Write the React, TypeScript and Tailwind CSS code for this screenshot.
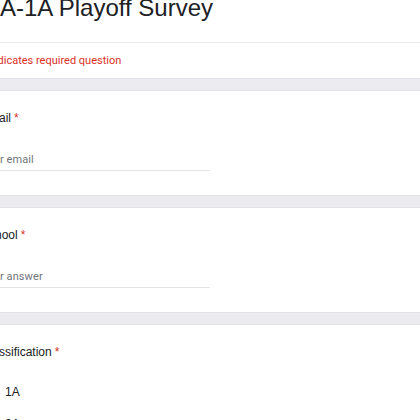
import React from 'react';

const sans = "font-['Liberation_Sans',Arial,sans-serif]";
const roboto = "font-['Roboto','Liberation_Sans',sans-serif]";

function Card({ children, className = '' }: { children: React.ReactNode; className?: string }) {
  return (
    <div className={`bg-white border-y border-[#e2e2e8] px-[18px] ${className}`}>{children}</div>
  );
}

function QuestionTitle({ text }: { text: string }) {
  return (
    <div className={`${sans} text-[12px] leading-[18px] text-[#202124]`}>
      {text}
      <span className="pl-[3px] text-[#d93025]">*</span>
    </div>
  );
}

function TextQuestion({ title, placeholder }: { title: string; placeholder: string }) {
  return (
    <Card className="h-[106px] pt-[18px]">
      <QuestionTitle text={title} />
      <div className="mt-[25px] w-[229px] border-b border-[#e3e3e3] pb-[2px]">
        <div className={`${roboto} text-[11px] leading-[16px] tracking-[0.1px] text-[#70757a]`}>{placeholder}</div>
      </div>
    </Card>
  );
}

const options = ['1A', '2A', '3A', '4A'];

export default function App() {
  return (
    <div className="h-[420px] w-[420px] overflow-hidden bg-[#ebebf0]">
      <div className="-ml-[37px] -mt-[26px] flex w-[500px] flex-col gap-[11px]">
        <Card className="h-[105px] pt-[18px]">
          <h1 className={`${sans} pl-[19px] text-[24px] leading-[30px] text-[#202124]`}>A-1A Playoff Survey</h1>
          <div className="-mx-[18px] mt-[19px] border-t border-[#ececec]" />
          <div className={`${roboto} pt-[10px] text-[11px] leading-[16px] text-[#d93025]`}>
            * Indicates required question
          </div>
        </Card>

        <TextQuestion title="Email" placeholder="Your email" />
        <TextQuestion title="School" placeholder="Your answer" />

        <Card className="pt-[18px] pb-[18px]">
          <QuestionTitle text="Classification" />
          <div className="mt-[15px] flex flex-col">
            {options.map((o) => (
              <label key={o} className="flex h-[32px] items-center gap-[9px]">
                <span className="h-[15px] w-[15px] rounded-full border-[1.5px] border-[#5f6368]" />
                <span className={`${sans} text-[12px] leading-[18px] text-[#202124]`}>{o}</span>
              </label>
            ))}
          </div>
        </Card>
      </div>
    </div>
  );
}
